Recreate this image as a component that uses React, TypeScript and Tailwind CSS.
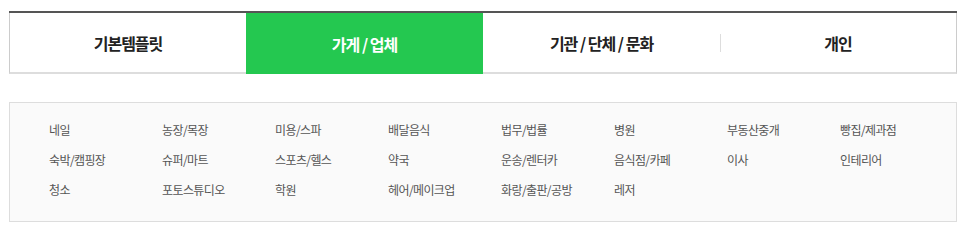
const tabs = ['기본템플릿', '가게 / 업체', '기관 / 단체 / 문화', '개인'];

const items = [
  '네일', '농장/목장', '미용/스파', '배달음식', '법무/법률', '병원', '부동산중개', '빵집/제과점',
  '숙박/캠핑장', '슈퍼/마트', '스포츠/헬스', '약국', '운송/렌터카', '음식점/카페', '이사', '인테리어',
  '청소', '포토스튜디오', '학원', '헤어/메이크업', '화랑/출판/공방', '레저',
];

export default function App() {
  const active = 1;

  return (
    <div
      className="w-[966px] h-[231px] bg-white pt-[11px] px-[9px]"
      style={{ fontFamily: '"Noto Sans CJK KR", "Noto Sans", sans-serif' }}
    >
      <div className="flex border-t-2 border-[#555]">
        {tabs.map((tab, i) => (
          <div
            key={tab}
            className={
              'relative w-[237px] h-[61px] flex items-center justify-center text-[16px] font-bold tracking-[-1px] ' +
              (i === active
                ? 'bg-[#24c850] text-white'
                : 'bg-white text-[#222] border-b-2 border-[#ddd]') +
              (i === 0 ? ' border-l border-l-[#ccc]' : '') +
              (i === tabs.length - 1 ? ' border-r border-r-[#ccc]' : '')
            }
          >
            {i === 3 && (
              <span className="absolute left-0 top-[21px] h-[18px] w-px bg-[#ddd]" />
            )}
            {tab}
          </div>
        ))}
      </div>

      <div className="mt-[28px] h-[120px] border border-[#ddd] bg-[#fafafa] pl-[39px] pt-[12px]">
        <ul className="grid grid-cols-[repeat(8,113px)]">
          {items.map((item) => (
            <li
              key={item}
              className="h-[30px] leading-[30px] text-[12px] tracking-[-0.6px] text-[#555] whitespace-nowrap"
            >
              {item}
            </li>
          ))}
        </ul>
      </div>
    </div>
  );
}
